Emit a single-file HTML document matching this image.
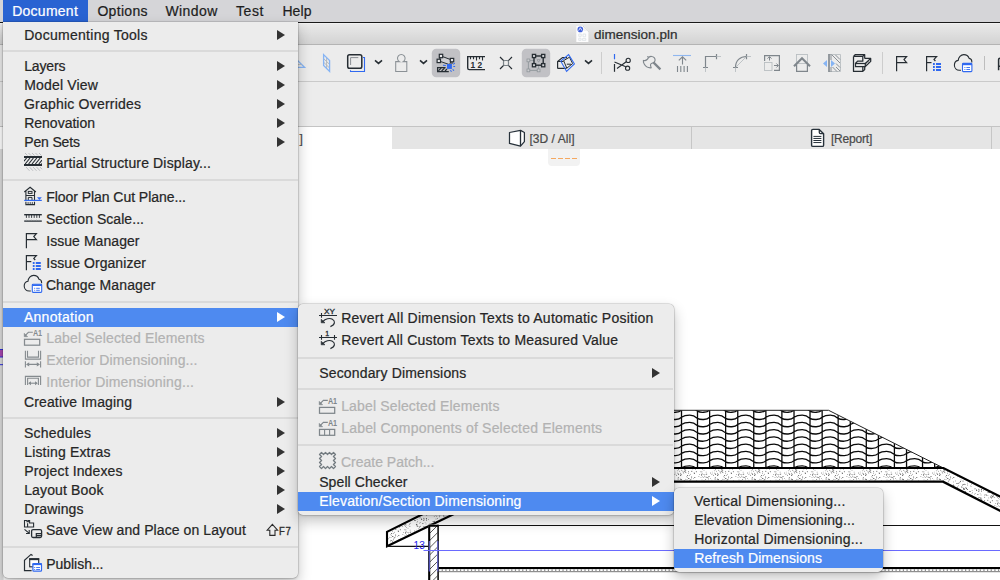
<!DOCTYPE html>
<html><head><meta charset="utf-8"><title>dimension.pln</title>
<style>
html,body{margin:0;padding:0;}
body{width:1000px;height:580px;overflow:hidden;position:relative;background:#fff;font-family:"Liberation Sans",sans-serif;}
.a{position:absolute;}
.t{position:absolute;white-space:pre;display:block;-webkit-text-stroke:0.22px;}
svg{position:absolute;overflow:visible;}
.menu{position:absolute;background:#ececec;box-shadow:0 0 0 0.5px rgba(0,0,0,.2),0 6px 14px rgba(0,0,0,.24),0 1px 3px rgba(0,0,0,.12);}
.sep{position:absolute;left:0;right:0;height:2px;background:#dbdbdb;}
.hl{position:absolute;left:0;right:0;height:19px;background:#4e8af0;}
.arr{position:absolute;width:0;height:0;border-left:8.5px solid #333;border-top:5px solid transparent;border-bottom:5px solid transparent;}
.arr.w{border-left-color:#fff;}
</style></head>
<body>
<div class="a" style="left:0;top:0;width:1000px;height:22px;background:#d5d5d8;"></div>
<div class="a" style="left:0;top:22px;width:1000px;height:1px;background:#1a1a1a;"></div>
<div class="a" style="left:0;top:23px;width:1000px;height:21px;background:linear-gradient(#eaeaea,#d3d3d3);"></div>
<div class="a" style="left:0;top:23px;width:1000px;height:1px;background:#f1f1f1;"></div>
<div class="a" style="left:0;top:44px;width:1000px;height:1px;background:#b4b4b4;"></div>
<div class="a" style="left:0;top:45px;width:1000px;height:81px;background:#ececec;"></div>
<div class="a" style="left:0;top:81px;width:1000px;height:1px;background:#cacaca;"></div>
<div class="a" style="left:0;top:126px;width:1000px;height:1px;background:#c4c4c4;"></div>
<div class="a" style="left:0;top:127px;width:1000px;height:22px;background:#e5e5e5;"></div>
<div class="a" style="left:0;top:127px;width:392px;height:22px;background:#fff;"></div>
<div class="a" style="left:691px;top:127px;width:1px;height:22px;background:#c6c6c6;"></div>
<div class="a" style="left:991px;top:127px;width:1px;height:22px;background:#c6c6c6;"></div>
<div class="a" style="left:3px;top:0;width:85px;height:22px;background:#2963d2;"></div>
<span class="t" style="left:12.20px;top:3.00px;font-size:14px;line-height:16px;letter-spacing:0.256px;color:#fff;">Document</span>
<span class="t" style="left:97.40px;top:3.00px;font-size:14px;line-height:16px;letter-spacing:0.309px;color:#1e1e1e;">Options</span>
<span class="t" style="left:165.40px;top:3.00px;font-size:14px;line-height:16px;letter-spacing:0.452px;color:#1e1e1e;">Window</span>
<span class="t" style="left:235.90px;top:3.00px;font-size:14px;line-height:16px;letter-spacing:0.641px;color:#1e1e1e;">Test</span>
<span class="t" style="left:282.40px;top:3.00px;font-size:14px;line-height:16px;letter-spacing:0.104px;color:#1e1e1e;">Help</span>
<span class="t" style="left:593.90px;top:27.00px;font-size:13.5px;line-height:15px;letter-spacing:0.024px;color:#2e2e2e;">dimension.pln</span>
<svg width="20" height="20" viewBox="574 24 20 20" style="left:574px;top:24px;" fill="none">
<path d="M576.3 26.1H583.6L588.4 31V41.9H576.3Z" fill="#fdfdfd"/>
<path d="M583.4 26.4L588.2 31.3" stroke="#9a9a9a" stroke-width="0.9"/>
<path d="M583.6 26.3V31H588.3" fill="#f0f0f0"/>
<circle cx="580.3" cy="29.4" r="2.8" fill="#3f5fdc"/>
<path d="M578.6 30.6L580.3 27.8L582 30.6" stroke="#e8ecff" stroke-width="0.9"/>
<path d="M578.8 34H581.2V36.4H578.8ZM583 34H585.6V36.8H583ZM578.8 38.2H581V40.4H578.8ZM582.4 38.6H585.8V40.4H582.4Z" stroke="#dfe3e7" stroke-width="0.9"/>
</svg>
<svg width="1000" height="130" viewBox="0 0 1000 130" style="left:0;top:0;" fill="none" stroke-linecap="butt">
<rect x="431.8" y="48.7" width="28.4" height="28.6" rx="4.5" fill="#c1c1c5"/>
<rect x="521.8" y="48.7" width="28.4" height="28.6" rx="4.5" fill="#c1c1c5"/>
<path d="M297 60L304.6 67.4H297" stroke="#86b4f4" stroke-width="1.3"/>
<path d="M298 64.6H301.4" stroke="#b4b9bd" stroke-width="1"/>
<path d="M326.6 57.8V68.6M323.6 58.6L329.6 64.4M323.6 62.2L329.6 68" stroke="#b4b9bd" stroke-width="1"/>
<path d="M323.6 54.6L329.6 60.6V71.4L323.6 65.4Z" stroke="#86b4f4" stroke-width="1.3"/>
<path d="M350.5 70.2V71.5H364.5V57.5H363" stroke="#3069f0" stroke-width="1.1"/>
<rect x="347.7" y="54.7" width="14.1" height="13.6" rx="1.8" stroke="#262d33" stroke-width="1.5"/>
<path d="M350.6 65V57.6H358.3" stroke="#8a8f94" stroke-width="1"/>
<path d="M375 60.3L378.5 63.4L382 60.3" stroke="#262d33" stroke-width="1.6" stroke-linejoin="miter"/>
<path d="M420 60.3L423.5 63.4L427 60.3" stroke="#262d33" stroke-width="1.6" stroke-linejoin="miter"/>
<path d="M585 60.3L588.5 63.4L592 60.3" stroke="#262d33" stroke-width="1.6" stroke-linejoin="miter"/>
<path d="M399.4 61.6A3.8 3.8 0 1 1 403.2 61.6H406.8V71.5H395.7V61.6Z" stroke="#8b9196" stroke-width="1.05"/>
<path d="M441 56L452 60.1L449.4 64.6L438.8 60.9Z" fill="#cfcfd3" stroke="#262d33" stroke-width="1"/>
<path d="M452 60.1V64" stroke="#262d33" stroke-width="1"/>
<rect x="439.3" y="54.3" width="3.4" height="3.4" fill="#e9e9eb" stroke="#262d33" stroke-width="1.2"/>
<rect x="437.1" y="59.199999999999996" width="3.4" height="3.4" fill="#e9e9eb" stroke="#262d33" stroke-width="1.2"/>
<rect x="450.3" y="58.4" width="3.4" height="3.4" fill="#e9e9eb" stroke="#262d33" stroke-width="1.2"/>
<path d="M437.6 71.6V67.7H445.6M437 71.5H448.8" stroke="#262d33" stroke-width="1.25"/>
<path d="M438.4 70.8L441.2 68M441.6 71L444.6 68M445 71L447 69" stroke="#262d33" stroke-width="1.1"/>
<rect x="447" y="64" width="4.9" height="4.9" fill="#3069f0"/>
<path d="M443 65.3L445.8 65.5M453.2 64.4L454.8 63.1M453.3 66.5H455.1M452.6 69.3L454 70.6M450.3 70.3L451.6 71.7" stroke="#3069f0" stroke-width="1.05"/>
<path d="M485 56.6H467.7V68Q467.7 69.6 469.3 69.6H485" stroke="#262d33" stroke-width="1.4"/>
<path d="M470.5 57V59.3M473.5 57V59.3M476.5 57V60.5M479.5 57V59.3M482.5 57V60.5" stroke="#262d33" stroke-width="1.1"/>
<text x="470.6" y="67.8" font-family="Liberation Sans, sans-serif" font-weight="bold" font-size="8.4" fill="#262d33" stroke="none">1</text>
<text x="477.6" y="67.8" font-family="Liberation Sans, sans-serif" font-weight="bold" font-size="8.4" fill="#262d33" stroke="none">2</text>
<path d="M500 57L512 69M512 57L500 69" stroke="#262d33" stroke-width="1.2"/>
<rect x="503.5" y="60.5" width="5" height="5" rx="1.3" fill="#ececec" stroke="#7b8388" stroke-width="1.2"/>
<path d="M528.4 60.4H538.6V70.4H528.4Z" stroke="#8f969a" stroke-width="0.9"/>
<rect x="527.0" y="59.0" width="2.8" height="2.8" fill="#cdcdd1" stroke="#8f969a" stroke-width="0.8"/>
<rect x="527.0" y="69.0" width="2.8" height="2.8" fill="#cdcdd1" stroke="#8f969a" stroke-width="0.8"/>
<rect x="537.2" y="69.0" width="2.8" height="2.8" fill="#cdcdd1" stroke="#8f969a" stroke-width="0.8"/>
<rect x="534" y="56" width="9.2" height="9.2" fill="#c1c1c5" stroke="#262d33" stroke-width="1.4"/>
<path d="M537 59.6H540.2L538.6 62.2Z" stroke="#8f969a" stroke-width="0.8"/>
<rect x="532.4" y="54.4" width="3.2" height="3.2" fill="#d4d4d8" stroke="#262d33" stroke-width="1.3"/>
<rect x="541.6" y="54.4" width="3.2" height="3.2" fill="#d4d4d8" stroke="#262d33" stroke-width="1.3"/>
<rect x="532.4" y="63.6" width="3.2" height="3.2" fill="#d4d4d8" stroke="#262d33" stroke-width="1.3"/>
<rect x="541.6" y="63.6" width="3.2" height="3.2" fill="#d4d4d8" stroke="#262d33" stroke-width="1.3"/>
<path d="M557.6 68.4V61.5L562.5 57.6H567M557.6 68.4H566.5M557.6 61.5H563.5" stroke="#262d33" stroke-width="1.2"/>
<path d="M563.6 60.6L569.5 57.2L572.6 63.6L566.8 68.2ZM566.8 64.2H571" stroke="#262d33" stroke-width="1"/>
<path d="M568.6 54.6L574.4 63.8L566.6 71.4L560.8 61.2Z" stroke="#3069f0" stroke-width="1.1"/>
<path d="M601.5 52V74M882.5 52V74" stroke="#cdcdcd" stroke-width="1"/>
<path d="M984.5 56V70" stroke="#bdbdbd" stroke-width="1"/>
<path d="M614.5 54V59.3" stroke="#3069f0" stroke-width="1.2"/>
<path d="M614.5 64V71.8" stroke="#262d33" stroke-width="1.2"/>
<path d="M614.5 62L625.8 66.8M617 68.5L626.2 61.8" stroke="#262d33" stroke-width="1.1"/>
<circle cx="628.2" cy="60.4" r="2.1" stroke="#262d33" stroke-width="1.1"/><circle cx="627.6" cy="68.2" r="2.1" stroke="#262d33" stroke-width="1.1"/>
<path d="M648.6 57.6C650 56 653 56 654.4 57.8C655.6 59.4 655.2 61.6 653.6 62.6C652.4 63.2 651 63.2 650.6 64.4C650.2 65.6 651 66.6 651.2 67.8C648.5 68 645.5 66.5 644.2 64C643.4 62.6 643.2 61.4 643.4 60.4C645 61 647.2 60.4 648.6 57.6Z" stroke="#7f868c" stroke-width="1.1"/>
<circle cx="647.9" cy="56.7" r="0.8" fill="#7f868c" stroke="none"/>
<path d="M653.4 62.4L660.4 69.4" stroke="#7f868c" stroke-width="2.2"/>
<path d="M673 55.5H691" stroke="#8fb7f0" stroke-width="1.1"/>
<path d="M682.5 57V64.5M678.8 60.4L682.5 56.8L686.2 60.4" stroke="#7f868c" stroke-width="1.1"/>
<path d="M677.5 66V72M680.8 66V72M684.1 66V72M687.4 66V72" stroke="#7f868c" stroke-width="1.1"/>
<path d="M705.5 67.5V56.5H716.5" stroke="#7f868c" stroke-width="1.2"/>
<path d="M716.5 54V59.2M703 67.5H708" stroke="#7f868c" stroke-width="1.2"/>
<path d="M716.5 56.5H721M705.5 67.5V72" stroke="#b9bec2" stroke-width="0.9"/>
<path d="M735.5 67.5C735.5 60.5 740 56.5 746.5 56.5" stroke="#7f868c" stroke-width="1.2"/>
<path d="M746.5 54V59.2M733 67.5H738" stroke="#7f868c" stroke-width="1.2"/>
<path d="M746.5 56.5H751M735.5 67.5V72M736 67L746 57" stroke="#b9bec2" stroke-width="0.9"/>
<rect x="764.5" y="62.5" width="7.5" height="8" stroke="#b9bec2" stroke-width="0.9"/>
<path d="M764.6 61V55.6H779.4V70.4H774" stroke="#7f868c" stroke-width="1.2"/>
<path d="M769.5 56.8V60.5M767.5 58.6L769.5 56.6L771.5 58.6M774 65.5H778.2M776.4 63.5L778.4 65.5L776.4 67.5" stroke="#7f868c" stroke-width="1"/>
<rect x="796.5" y="54.5" width="11" height="9" stroke="#b9bec2" stroke-width="0.9"/>
<path d="M796.6 64.5V71.4H807.4V64.5" stroke="#7f868c" stroke-width="1.2"/>
<path d="M794 66.2L802 58.2L810 66.2" stroke="#7f868c" stroke-width="2.1" fill="none"/>
<path d="M823 63.5L827 60V67ZM835 63.5L831 60V67Z" fill="#86b4f4" stroke="none"/>
<path d="M828.8 54.5H840.5V71.5H828.8" stroke="#b9bec2" stroke-width="0.9"/>
<path d="M829 54V72" stroke="#7f868c" stroke-width="1.6"/>
<path d="M831 54V60M831 67V72" stroke="#7f868c" stroke-width="0.9"/>
<path d="M832 55L840 63M835.5 55L840 59.5M836 63.5L840 67.5M832.5 67L837 71.5M836 67L840 71" stroke="#7f868c" stroke-width="0.9"/>
<path d="M853.5 56.4V71.4H862.8L864.7 69.6V66.8M853.5 56.4L855.4 54.5H864.7V58.4M853.5 56.4H862.8L864.7 54.5M862.8 56.4V61.2H857.6L855.5 63.5M862.8 66.8V71.4" stroke="#262d33" stroke-width="1.25" stroke-linejoin="round"/>
<rect x="855.5" y="63.5" width="9.8" height="3.1" stroke="#262d33" stroke-width="1.25"/>
<path d="M865.3 63.5L870.7 58.4H864.7M870.7 58.4V61.4L865.3 66.6" stroke="#262d33" stroke-width="1.25" stroke-linejoin="round"/>
<path d="M866.6 65L870.4 61.2M866 63.6L869.4 60.2" stroke="#262d33" stroke-width="0.8" stroke-dasharray="1 0.8"/>
<path d="M896.6 71.2V56.6H906.6L904 59.6L906.6 62.6H896.6" stroke="#262d33" stroke-width="1.2"/>
<path d="M926.6 71.2V56.6H936.6L934 59.4L935.4 61" stroke="#262d33" stroke-width="1.2"/>
<path d="M926.6 62.6H931.5" stroke="#262d33" stroke-width="1.2"/>
<path d="M933 64H934.8M936 64H941" stroke="#3069f0" stroke-width="1.9"/>
<path d="M933 67H934.8M936 67H941" stroke="#3069f0" stroke-width="1.9"/>
<path d="M933 70H934.8M936 70H941" stroke="#3069f0" stroke-width="1.9"/>
<path d="M961 70.2H959.4C956.6 70.2 954.4 68 954.4 65.2C954.4 62.8 956 60.8 958.2 60.4C958.4 57.2 960.8 54.6 963.8 54.6C966.4 54.6 968.4 56.2 969.2 58.4C970.6 58.6 971.8 60 971.8 61.6V62.4" stroke="#262d33" stroke-width="1.1"/>
<rect x="962.5" y="63.4" width="9.4" height="8.2" rx="0.8" fill="#fff" stroke="#3069f0" stroke-width="1.1"/>
<path d="M962.5 64.4H971.9" stroke="#3069f0" stroke-width="1.6"/>
<path d="M964.4 67.5H965.4M966.4 67.5H970M964.4 69.5H965.4M966.4 69.5H970" stroke="#3069f0" stroke-width="0.9"/>
<path d="M998.6 70.2V59.6Q998.6 58.2 1000.2 58.2M998.6 66.2H1001" stroke="#262d33" stroke-width="1.5"/>
</svg>
<span class="t" style="left:299.60px;top:131.50px;font-size:12px;line-height:14px;letter-spacing:0.000px;color:#4a4a4a;">]</span>
<span class="t" style="left:529.40px;top:131.50px;font-size:12px;line-height:14px;letter-spacing:0.047px;color:#4a4a4a;">[3D / All]</span>
<span class="t" style="left:830.90px;top:131.50px;font-size:12px;line-height:14px;letter-spacing:-0.183px;color:#4a4a4a;">[Report]</span>
<svg width="1000" height="24" viewBox="0 126 1000 24" style="left:0;top:126px;" fill="none">
<path d="M509.5 132.5L520.5 130.4L524.4 132.5V141.7L520.5 146.2L509.5 143.4Z" fill="#fff" stroke="#27313a" stroke-width="1.25" stroke-linejoin="round"/>
<path d="M520.5 130.4V146.2" stroke="#27313a" stroke-width="1.3"/>
<path d="M812.9 129.4H819.2L823.6 133.8V145.2Q823.6 146.4 822.4 146.4H812.9Q811.6 146.4 811.6 145.2V130.6Q811.6 129.4 812.9 129.4Z" fill="#fff" stroke="#27313a" stroke-width="1.4" stroke-linejoin="round"/>
<path d="M819.3 129.6V132.6Q819.3 133.7 820.4 133.7H823.4" stroke="#27313a" stroke-width="1.3"/>
<path d="M813.4 136.4H821.4M813.4 138.45H821.4M813.4 140.5H821.4M813.4 142.55H821.4" stroke="#27313a" stroke-width="1"/>
</svg>
<div class="a" style="left:548px;top:149px;width:32px;height:16.5px;background:#f2f2f2;border-radius:0 0 4px 4px;"></div>
<div class="a" style="left:551.2px;top:157.8px;width:5px;height:1.2px;background:#f5a860;"></div>
<div class="a" style="left:558.2px;top:157.8px;width:5px;height:1.2px;background:#f5a860;"></div>
<div class="a" style="left:565.2px;top:157.8px;width:5px;height:1.2px;background:#f5a860;"></div>
<div class="a" style="left:572.2px;top:157.8px;width:5px;height:1.2px;background:#f5a860;"></div>
<svg width="1000" height="580" viewBox="0 0 1000 580" style="left:0;top:0;">
<defs>
<pattern id="stip" width="37" height="29" patternUnits="userSpaceOnUse"><rect width="37" height="29" fill="#fff"/><g fill="#333"><circle cx="12.0" cy="4.4" r="0.35"/><circle cx="2.7" cy="15.5" r="0.45"/><circle cx="21.6" cy="26.4" r="0.4"/><circle cx="1.4" cy="12.6" r="0.35"/><circle cx="8.9" cy="16.0" r="0.35"/><circle cx="30.6" cy="3.6" r="0.4"/><circle cx="23.3" cy="16.9" r="0.35"/><circle cx="21.4" cy="11.5" r="0.4"/><circle cx="1.7" cy="24.9" r="0.45"/><circle cx="15.5" cy="15.7" r="0.45"/><circle cx="20.7" cy="19.8" r="0.35"/><circle cx="21.5" cy="18.5" r="0.45"/><circle cx="3.6" cy="20.7" r="0.35"/><circle cx="22.9" cy="14.4" r="0.5"/><circle cx="28.8" cy="13.5" r="0.5"/><circle cx="13.4" cy="7.2" r="0.4"/><circle cx="25.9" cy="7.1" r="0.45"/><circle cx="19.4" cy="25.4" r="0.5"/><circle cx="10.7" cy="28.4" r="0.35"/><circle cx="18.9" cy="4.8" r="0.45"/><circle cx="5.6" cy="14.2" r="0.35"/><circle cx="35.6" cy="2.3" r="0.45"/><circle cx="12.6" cy="10.2" r="0.5"/><circle cx="21.5" cy="13.2" r="0.35"/><circle cx="35.0" cy="13.7" r="0.35"/><circle cx="2.2" cy="20.3" r="0.5"/><circle cx="10.5" cy="11.2" r="0.45"/><circle cx="0.8" cy="13.4" r="0.4"/><circle cx="22.6" cy="14.3" r="0.4"/><circle cx="28.4" cy="3.8" r="0.4"/><circle cx="14.7" cy="26.6" r="0.5"/><circle cx="3.0" cy="13.0" r="0.45"/><circle cx="32.7" cy="23.8" r="0.45"/><circle cx="26.1" cy="28.6" r="0.5"/><circle cx="35.4" cy="4.4" r="0.4"/><circle cx="5.6" cy="19.1" r="0.35"/><circle cx="17.9" cy="17.1" r="0.45"/><circle cx="10.4" cy="4.2" r="0.45"/><circle cx="22.6" cy="9.2" r="0.4"/><circle cx="25.5" cy="14.9" r="0.35"/><circle cx="16.9" cy="25.3" r="0.5"/><circle cx="14.7" cy="11.4" r="0.5"/><circle cx="23.5" cy="1.8" r="0.35"/><circle cx="36.4" cy="12.8" r="0.35"/><circle cx="12.6" cy="1.5" r="0.35"/><circle cx="21.0" cy="15.6" r="0.45"/><circle cx="22.7" cy="2.0" r="0.4"/><circle cx="22.7" cy="4.3" r="0.45"/><circle cx="35.4" cy="17.5" r="0.5"/><circle cx="4.5" cy="24.6" r="0.5"/><circle cx="17.8" cy="9.0" r="0.4"/><circle cx="3.8" cy="9.9" r="0.45"/><circle cx="17.7" cy="20.1" r="0.35"/><circle cx="7.6" cy="27.6" r="0.45"/><circle cx="5.4" cy="15.8" r="0.35"/><circle cx="28.1" cy="8.6" r="0.35"/><circle cx="25.8" cy="7.6" r="0.45"/><circle cx="33.6" cy="10.3" r="0.4"/><circle cx="19.7" cy="22.6" r="0.45"/><circle cx="23.5" cy="17.8" r="0.4"/><circle cx="29.8" cy="23.7" r="0.4"/><circle cx="7.4" cy="14.3" r="0.35"/><circle cx="36.6" cy="22.9" r="0.5"/><circle cx="9.6" cy="20.1" r="0.45"/><circle cx="16.5" cy="27.2" r="0.45"/><circle cx="35.3" cy="10.6" r="0.4"/><circle cx="3.8" cy="13.6" r="0.45"/><circle cx="7.6" cy="18.1" r="0.35"/><circle cx="17.7" cy="18.9" r="0.35"/><circle cx="30.9" cy="3.5" r="0.5"/><circle cx="28.9" cy="21.8" r="0.5"/><circle cx="32.9" cy="12.6" r="0.45"/><circle cx="3.2" cy="27.4" r="0.5"/><circle cx="17.1" cy="21.6" r="0.35"/><circle cx="26.8" cy="4.9" r="0.4"/><circle cx="1.0" cy="17.1" r="0.5"/><circle cx="29.8" cy="4.2" r="0.5"/><circle cx="24.3" cy="10.2" r="0.4"/><circle cx="0.8" cy="23.2" r="0.35"/><circle cx="19.5" cy="27.1" r="0.5"/><circle cx="36.5" cy="5.6" r="0.4"/><circle cx="1.0" cy="6.2" r="0.4"/><circle cx="28.3" cy="9.5" r="0.5"/><circle cx="30.9" cy="1.8" r="0.45"/><circle cx="33.2" cy="19.2" r="0.5"/><circle cx="30.6" cy="25.5" r="0.4"/><circle cx="19.7" cy="15.2" r="0.35"/><circle cx="32.3" cy="22.5" r="0.35"/><circle cx="28.7" cy="4.3" r="0.4"/><circle cx="17.5" cy="21.0" r="0.35"/><circle cx="12.1" cy="15.0" r="0.5"/><circle cx="29.0" cy="3.1" r="0.35"/><circle cx="9.2" cy="8.0" r="0.35"/><circle cx="18.8" cy="16.3" r="0.35"/><circle cx="16.4" cy="17.8" r="0.4"/><circle cx="25.6" cy="13.1" r="0.5"/><circle cx="18.8" cy="7.2" r="0.45"/><circle cx="34.1" cy="25.9" r="0.4"/><circle cx="31.1" cy="4.0" r="0.35"/><circle cx="14.5" cy="9.2" r="0.4"/><circle cx="15.8" cy="6.2" r="0.45"/><circle cx="29.0" cy="26.0" r="0.4"/><circle cx="34.8" cy="18.7" r="0.45"/><circle cx="5.3" cy="25.6" r="0.5"/><circle cx="8.1" cy="27.6" r="0.5"/><circle cx="32.7" cy="4.7" r="0.4"/><circle cx="6.0" cy="12.5" r="0.5"/><circle cx="12.5" cy="5.7" r="0.45"/><circle cx="3.4" cy="10.6" r="0.45"/><circle cx="20.5" cy="12.8" r="0.35"/><circle cx="14.2" cy="15.0" r="0.45"/><circle cx="19.0" cy="1.9" r="0.4"/><circle cx="36.0" cy="3.0" r="0.45"/><circle cx="10.1" cy="26.3" r="0.4"/><circle cx="10.0" cy="3.8" r="0.5"/><circle cx="31.4" cy="19.6" r="0.45"/><circle cx="15.0" cy="15.6" r="0.5"/><circle cx="25.9" cy="2.6" r="0.35"/><circle cx="29.6" cy="5.3" r="0.35"/><circle cx="10.0" cy="0.5" r="0.35"/><circle cx="29.7" cy="2.4" r="0.4"/><circle cx="2.5" cy="25.0" r="0.5"/><circle cx="0.4" cy="28.8" r="0.5"/><circle cx="34.3" cy="7.8" r="0.4"/><circle cx="1.6" cy="20.6" r="0.35"/><circle cx="35.9" cy="7.6" r="0.4"/><circle cx="7.5" cy="9.0" r="0.45"/><circle cx="19.7" cy="6.0" r="0.5"/><circle cx="18.5" cy="5.2" r="0.45"/><circle cx="29.7" cy="28.8" r="0.35"/><circle cx="0.6" cy="21.3" r="0.4"/><circle cx="19.0" cy="7.1" r="0.5"/><circle cx="3.9" cy="23.7" r="0.5"/><circle cx="24.3" cy="15.8" r="0.5"/><circle cx="35.9" cy="8.9" r="0.4"/><circle cx="36.4" cy="9.9" r="0.4"/><circle cx="15.0" cy="10.1" r="0.35"/><circle cx="31.0" cy="0.4" r="0.45"/><circle cx="15.9" cy="1.6" r="0.5"/><circle cx="32.2" cy="19.4" r="0.45"/><circle cx="22.2" cy="20.1" r="0.35"/><circle cx="17.0" cy="4.6" r="0.5"/><circle cx="0.1" cy="10.6" r="0.45"/><circle cx="36.0" cy="15.9" r="0.4"/><circle cx="1.3" cy="25.6" r="0.4"/><circle cx="13.2" cy="0.0" r="0.5"/><circle cx="3.1" cy="8.1" r="0.4"/><circle cx="9.2" cy="22.5" r="0.35"/><circle cx="9.8" cy="2.6" r="0.5"/><circle cx="21.7" cy="11.4" r="0.45"/><circle cx="11.3" cy="6.8" r="0.4"/><circle cx="24.3" cy="20.8" r="0.5"/><circle cx="28.3" cy="20.9" r="0.5"/><circle cx="5.5" cy="21.0" r="0.4"/><circle cx="1.6" cy="24.2" r="0.5"/><circle cx="27.2" cy="23.6" r="0.4"/><circle cx="33.7" cy="21.8" r="0.35"/><circle cx="30.6" cy="16.9" r="0.4"/><circle cx="3.1" cy="1.2" r="0.45"/><circle cx="35.5" cy="10.9" r="0.5"/><circle cx="20.7" cy="18.2" r="0.4"/><circle cx="18.1" cy="0.1" r="0.35"/><circle cx="27.7" cy="14.6" r="0.35"/><circle cx="24.4" cy="1.9" r="0.5"/><circle cx="9.3" cy="2.2" r="0.45"/><circle cx="8.7" cy="21.9" r="0.4"/><circle cx="27.4" cy="28.3" r="0.5"/><circle cx="31.3" cy="2.2" r="0.45"/><circle cx="28.4" cy="17.9" r="0.4"/><circle cx="2.9" cy="4.3" r="0.45"/><path d="M22.8 18.7l-0.4 1.0" stroke="#333" stroke-width="0.6"/><path d="M4.7 13.0l0.0 1.1" stroke="#333" stroke-width="0.6"/><path d="M34.0 2.7l0.9 0.7" stroke="#333" stroke-width="0.6"/><path d="M17.1 19.1l0.7 0.9" stroke="#333" stroke-width="0.6"/><path d="M16.3 20.7l-1.1 0.0" stroke="#333" stroke-width="0.6"/><path d="M19.2 8.4l1.1 0.3" stroke="#333" stroke-width="0.6"/><path d="M16.6 7.8l1.1 0.3" stroke="#333" stroke-width="0.6"/><path d="M17.7 26.9l-1.1 0.0" stroke="#333" stroke-width="0.6"/><path d="M13.5 24.7l-1.1 0.2" stroke="#333" stroke-width="0.6"/><path d="M2.6 2.4l-0.8 0.8" stroke="#333" stroke-width="0.6"/><path d="M9.2 9.7l-0.4 1.0" stroke="#333" stroke-width="0.6"/><path d="M22.1 7.5l1.0 0.4" stroke="#333" stroke-width="0.6"/><path d="M12.8 13.4l-1.0 0.4" stroke="#333" stroke-width="0.6"/><path d="M13.8 4.3l-1.1 0.2" stroke="#333" stroke-width="0.6"/><path d="M23.9 10.9l-0.7 0.8" stroke="#333" stroke-width="0.6"/><path d="M14.6 10.2l1.0 0.4" stroke="#333" stroke-width="0.6"/><path d="M11.6 8.8l0.5 1.0" stroke="#333" stroke-width="0.6"/><path d="M13.9 25.4l0.9 0.6" stroke="#333" stroke-width="0.6"/><path d="M0.4 20.0l0.8 0.8" stroke="#333" stroke-width="0.6"/><path d="M2.3 10.5l-1.0 0.4" stroke="#333" stroke-width="0.6"/><path d="M2.7 25.0l-0.8 0.8" stroke="#333" stroke-width="0.6"/><path d="M29.9 7.6l1.1 0.2" stroke="#333" stroke-width="0.6"/></g></pattern>
<clipPath id="tileclip"><polygon points="640,410.3 828.6,410.3 943.4,468 640,468"/></clipPath>
<clipPath id="wallclip"><rect x="429.5" y="526" width="8" height="60"/></clipPath>
</defs>
<g clip-path="url(#tileclip)"><path d="M625.24 410V468M641.24 410V468M653.37 410V468M669.37 410V468M681.50 410V468M697.50 410V468M709.63 410V468M725.63 410V468M737.76 410V468M753.76 410V468M765.89 410V468M781.89 410V468M794.02 410V468M810.02 410V468M822.15 410V468M838.15 410V468M850.28 410V468M866.28 410V468M878.41 410V468M894.41 410V468M906.54 410V468M922.54 410V468M934.67 410V468M950.67 410V468M962.80 410V468M978.80 410V468M625.24 409.96C627.74 408.26 630.74 407.96 633.44 407.96S639.04 409.26 641.24 411.16C642.84 412.16 645.24 412.36 647.44 412.26S652.04 411.36 653.37 409.96C655.87 408.26 658.87 407.96 661.57 407.96S667.17 409.26 669.37 411.16C670.97 412.16 673.37 412.36 675.57 412.26S680.17 411.36 681.50 409.96C684.00 408.26 687.00 407.96 689.70 407.96S695.30 409.26 697.50 411.16C699.10 412.16 701.50 412.36 703.70 412.26S708.30 411.36 709.63 409.96C712.13 408.26 715.13 407.96 717.83 407.96S723.43 409.26 725.63 411.16C727.23 412.16 729.63 412.36 731.83 412.26S736.43 411.36 737.76 409.96C740.26 408.26 743.26 407.96 745.96 407.96S751.56 409.26 753.76 411.16C755.36 412.16 757.76 412.36 759.96 412.26S764.56 411.36 765.89 409.96C768.39 408.26 771.39 407.96 774.09 407.96S779.69 409.26 781.89 411.16C783.49 412.16 785.89 412.36 788.09 412.26S792.69 411.36 794.02 409.96C796.52 408.26 799.52 407.96 802.22 407.96S807.82 409.26 810.02 411.16C811.62 412.16 814.02 412.36 816.22 412.26S820.82 411.36 822.15 409.96C824.65 408.26 827.65 407.96 830.35 407.96S835.95 409.26 838.15 411.16C839.75 412.16 842.15 412.36 844.35 412.26S848.95 411.36 850.28 409.96C852.78 408.26 855.78 407.96 858.48 407.96S864.08 409.26 866.28 411.16C867.88 412.16 870.28 412.36 872.48 412.26S877.08 411.36 878.41 409.96C880.91 408.26 883.91 407.96 886.61 407.96S892.21 409.26 894.41 411.16C896.01 412.16 898.41 412.36 900.61 412.26S905.21 411.36 906.54 409.96C909.04 408.26 912.04 407.96 914.74 407.96S920.34 409.26 922.54 411.16C924.14 412.16 926.54 412.36 928.74 412.26S933.34 411.36 934.67 409.96C937.17 408.26 940.17 407.96 942.87 407.96S948.47 409.26 950.67 411.16C952.27 412.16 954.67 412.36 956.87 412.26S961.47 411.36 962.80 409.96C965.30 408.26 968.30 407.96 971.00 407.96S976.60 409.26 978.80 411.16C980.40 412.16 982.80 412.36 985.00 412.26S989.60 411.36 990.93 409.96M625.24 417.20C627.74 415.50 630.74 415.20 633.44 415.20S639.04 416.50 641.24 418.40C642.84 419.40 645.24 419.60 647.44 419.50S652.04 418.60 653.37 417.20C655.87 415.50 658.87 415.20 661.57 415.20S667.17 416.50 669.37 418.40C670.97 419.40 673.37 419.60 675.57 419.50S680.17 418.60 681.50 417.20C684.00 415.50 687.00 415.20 689.70 415.20S695.30 416.50 697.50 418.40C699.10 419.40 701.50 419.60 703.70 419.50S708.30 418.60 709.63 417.20C712.13 415.50 715.13 415.20 717.83 415.20S723.43 416.50 725.63 418.40C727.23 419.40 729.63 419.60 731.83 419.50S736.43 418.60 737.76 417.20C740.26 415.50 743.26 415.20 745.96 415.20S751.56 416.50 753.76 418.40C755.36 419.40 757.76 419.60 759.96 419.50S764.56 418.60 765.89 417.20C768.39 415.50 771.39 415.20 774.09 415.20S779.69 416.50 781.89 418.40C783.49 419.40 785.89 419.60 788.09 419.50S792.69 418.60 794.02 417.20C796.52 415.50 799.52 415.20 802.22 415.20S807.82 416.50 810.02 418.40C811.62 419.40 814.02 419.60 816.22 419.50S820.82 418.60 822.15 417.20C824.65 415.50 827.65 415.20 830.35 415.20S835.95 416.50 838.15 418.40C839.75 419.40 842.15 419.60 844.35 419.50S848.95 418.60 850.28 417.20C852.78 415.50 855.78 415.20 858.48 415.20S864.08 416.50 866.28 418.40C867.88 419.40 870.28 419.60 872.48 419.50S877.08 418.60 878.41 417.20C880.91 415.50 883.91 415.20 886.61 415.20S892.21 416.50 894.41 418.40C896.01 419.40 898.41 419.60 900.61 419.50S905.21 418.60 906.54 417.20C909.04 415.50 912.04 415.20 914.74 415.20S920.34 416.50 922.54 418.40C924.14 419.40 926.54 419.60 928.74 419.50S933.34 418.60 934.67 417.20C937.17 415.50 940.17 415.20 942.87 415.20S948.47 416.50 950.67 418.40C952.27 419.40 954.67 419.60 956.87 419.50S961.47 418.60 962.80 417.20C965.30 415.50 968.30 415.20 971.00 415.20S976.60 416.50 978.80 418.40C980.40 419.40 982.80 419.60 985.00 419.50S989.60 418.60 990.93 417.20M625.24 424.44C627.74 422.74 630.74 422.44 633.44 422.44S639.04 423.74 641.24 425.64C642.84 426.64 645.24 426.84 647.44 426.74S652.04 425.84 653.37 424.44C655.87 422.74 658.87 422.44 661.57 422.44S667.17 423.74 669.37 425.64C670.97 426.64 673.37 426.84 675.57 426.74S680.17 425.84 681.50 424.44C684.00 422.74 687.00 422.44 689.70 422.44S695.30 423.74 697.50 425.64C699.10 426.64 701.50 426.84 703.70 426.74S708.30 425.84 709.63 424.44C712.13 422.74 715.13 422.44 717.83 422.44S723.43 423.74 725.63 425.64C727.23 426.64 729.63 426.84 731.83 426.74S736.43 425.84 737.76 424.44C740.26 422.74 743.26 422.44 745.96 422.44S751.56 423.74 753.76 425.64C755.36 426.64 757.76 426.84 759.96 426.74S764.56 425.84 765.89 424.44C768.39 422.74 771.39 422.44 774.09 422.44S779.69 423.74 781.89 425.64C783.49 426.64 785.89 426.84 788.09 426.74S792.69 425.84 794.02 424.44C796.52 422.74 799.52 422.44 802.22 422.44S807.82 423.74 810.02 425.64C811.62 426.64 814.02 426.84 816.22 426.74S820.82 425.84 822.15 424.44C824.65 422.74 827.65 422.44 830.35 422.44S835.95 423.74 838.15 425.64C839.75 426.64 842.15 426.84 844.35 426.74S848.95 425.84 850.28 424.44C852.78 422.74 855.78 422.44 858.48 422.44S864.08 423.74 866.28 425.64C867.88 426.64 870.28 426.84 872.48 426.74S877.08 425.84 878.41 424.44C880.91 422.74 883.91 422.44 886.61 422.44S892.21 423.74 894.41 425.64C896.01 426.64 898.41 426.84 900.61 426.74S905.21 425.84 906.54 424.44C909.04 422.74 912.04 422.44 914.74 422.44S920.34 423.74 922.54 425.64C924.14 426.64 926.54 426.84 928.74 426.74S933.34 425.84 934.67 424.44C937.17 422.74 940.17 422.44 942.87 422.44S948.47 423.74 950.67 425.64C952.27 426.64 954.67 426.84 956.87 426.74S961.47 425.84 962.80 424.44C965.30 422.74 968.30 422.44 971.00 422.44S976.60 423.74 978.80 425.64C980.40 426.64 982.80 426.84 985.00 426.74S989.60 425.84 990.93 424.44M625.24 431.68C627.74 429.98 630.74 429.68 633.44 429.68S639.04 430.98 641.24 432.88C642.84 433.88 645.24 434.08 647.44 433.98S652.04 433.08 653.37 431.68C655.87 429.98 658.87 429.68 661.57 429.68S667.17 430.98 669.37 432.88C670.97 433.88 673.37 434.08 675.57 433.98S680.17 433.08 681.50 431.68C684.00 429.98 687.00 429.68 689.70 429.68S695.30 430.98 697.50 432.88C699.10 433.88 701.50 434.08 703.70 433.98S708.30 433.08 709.63 431.68C712.13 429.98 715.13 429.68 717.83 429.68S723.43 430.98 725.63 432.88C727.23 433.88 729.63 434.08 731.83 433.98S736.43 433.08 737.76 431.68C740.26 429.98 743.26 429.68 745.96 429.68S751.56 430.98 753.76 432.88C755.36 433.88 757.76 434.08 759.96 433.98S764.56 433.08 765.89 431.68C768.39 429.98 771.39 429.68 774.09 429.68S779.69 430.98 781.89 432.88C783.49 433.88 785.89 434.08 788.09 433.98S792.69 433.08 794.02 431.68C796.52 429.98 799.52 429.68 802.22 429.68S807.82 430.98 810.02 432.88C811.62 433.88 814.02 434.08 816.22 433.98S820.82 433.08 822.15 431.68C824.65 429.98 827.65 429.68 830.35 429.68S835.95 430.98 838.15 432.88C839.75 433.88 842.15 434.08 844.35 433.98S848.95 433.08 850.28 431.68C852.78 429.98 855.78 429.68 858.48 429.68S864.08 430.98 866.28 432.88C867.88 433.88 870.28 434.08 872.48 433.98S877.08 433.08 878.41 431.68C880.91 429.98 883.91 429.68 886.61 429.68S892.21 430.98 894.41 432.88C896.01 433.88 898.41 434.08 900.61 433.98S905.21 433.08 906.54 431.68C909.04 429.98 912.04 429.68 914.74 429.68S920.34 430.98 922.54 432.88C924.14 433.88 926.54 434.08 928.74 433.98S933.34 433.08 934.67 431.68C937.17 429.98 940.17 429.68 942.87 429.68S948.47 430.98 950.67 432.88C952.27 433.88 954.67 434.08 956.87 433.98S961.47 433.08 962.80 431.68C965.30 429.98 968.30 429.68 971.00 429.68S976.60 430.98 978.80 432.88C980.40 433.88 982.80 434.08 985.00 433.98S989.60 433.08 990.93 431.68M625.24 438.92C627.74 437.22 630.74 436.92 633.44 436.92S639.04 438.22 641.24 440.12C642.84 441.12 645.24 441.32 647.44 441.22S652.04 440.32 653.37 438.92C655.87 437.22 658.87 436.92 661.57 436.92S667.17 438.22 669.37 440.12C670.97 441.12 673.37 441.32 675.57 441.22S680.17 440.32 681.50 438.92C684.00 437.22 687.00 436.92 689.70 436.92S695.30 438.22 697.50 440.12C699.10 441.12 701.50 441.32 703.70 441.22S708.30 440.32 709.63 438.92C712.13 437.22 715.13 436.92 717.83 436.92S723.43 438.22 725.63 440.12C727.23 441.12 729.63 441.32 731.83 441.22S736.43 440.32 737.76 438.92C740.26 437.22 743.26 436.92 745.96 436.92S751.56 438.22 753.76 440.12C755.36 441.12 757.76 441.32 759.96 441.22S764.56 440.32 765.89 438.92C768.39 437.22 771.39 436.92 774.09 436.92S779.69 438.22 781.89 440.12C783.49 441.12 785.89 441.32 788.09 441.22S792.69 440.32 794.02 438.92C796.52 437.22 799.52 436.92 802.22 436.92S807.82 438.22 810.02 440.12C811.62 441.12 814.02 441.32 816.22 441.22S820.82 440.32 822.15 438.92C824.65 437.22 827.65 436.92 830.35 436.92S835.95 438.22 838.15 440.12C839.75 441.12 842.15 441.32 844.35 441.22S848.95 440.32 850.28 438.92C852.78 437.22 855.78 436.92 858.48 436.92S864.08 438.22 866.28 440.12C867.88 441.12 870.28 441.32 872.48 441.22S877.08 440.32 878.41 438.92C880.91 437.22 883.91 436.92 886.61 436.92S892.21 438.22 894.41 440.12C896.01 441.12 898.41 441.32 900.61 441.22S905.21 440.32 906.54 438.92C909.04 437.22 912.04 436.92 914.74 436.92S920.34 438.22 922.54 440.12C924.14 441.12 926.54 441.32 928.74 441.22S933.34 440.32 934.67 438.92C937.17 437.22 940.17 436.92 942.87 436.92S948.47 438.22 950.67 440.12C952.27 441.12 954.67 441.32 956.87 441.22S961.47 440.32 962.80 438.92C965.30 437.22 968.30 436.92 971.00 436.92S976.60 438.22 978.80 440.12C980.40 441.12 982.80 441.32 985.00 441.22S989.60 440.32 990.93 438.92M625.24 446.16C627.74 444.46 630.74 444.16 633.44 444.16S639.04 445.46 641.24 447.36C642.84 448.36 645.24 448.56 647.44 448.46S652.04 447.56 653.37 446.16C655.87 444.46 658.87 444.16 661.57 444.16S667.17 445.46 669.37 447.36C670.97 448.36 673.37 448.56 675.57 448.46S680.17 447.56 681.50 446.16C684.00 444.46 687.00 444.16 689.70 444.16S695.30 445.46 697.50 447.36C699.10 448.36 701.50 448.56 703.70 448.46S708.30 447.56 709.63 446.16C712.13 444.46 715.13 444.16 717.83 444.16S723.43 445.46 725.63 447.36C727.23 448.36 729.63 448.56 731.83 448.46S736.43 447.56 737.76 446.16C740.26 444.46 743.26 444.16 745.96 444.16S751.56 445.46 753.76 447.36C755.36 448.36 757.76 448.56 759.96 448.46S764.56 447.56 765.89 446.16C768.39 444.46 771.39 444.16 774.09 444.16S779.69 445.46 781.89 447.36C783.49 448.36 785.89 448.56 788.09 448.46S792.69 447.56 794.02 446.16C796.52 444.46 799.52 444.16 802.22 444.16S807.82 445.46 810.02 447.36C811.62 448.36 814.02 448.56 816.22 448.46S820.82 447.56 822.15 446.16C824.65 444.46 827.65 444.16 830.35 444.16S835.95 445.46 838.15 447.36C839.75 448.36 842.15 448.56 844.35 448.46S848.95 447.56 850.28 446.16C852.78 444.46 855.78 444.16 858.48 444.16S864.08 445.46 866.28 447.36C867.88 448.36 870.28 448.56 872.48 448.46S877.08 447.56 878.41 446.16C880.91 444.46 883.91 444.16 886.61 444.16S892.21 445.46 894.41 447.36C896.01 448.36 898.41 448.56 900.61 448.46S905.21 447.56 906.54 446.16C909.04 444.46 912.04 444.16 914.74 444.16S920.34 445.46 922.54 447.36C924.14 448.36 926.54 448.56 928.74 448.46S933.34 447.56 934.67 446.16C937.17 444.46 940.17 444.16 942.87 444.16S948.47 445.46 950.67 447.36C952.27 448.36 954.67 448.56 956.87 448.46S961.47 447.56 962.80 446.16C965.30 444.46 968.30 444.16 971.00 444.16S976.60 445.46 978.80 447.36C980.40 448.36 982.80 448.56 985.00 448.46S989.60 447.56 990.93 446.16M625.24 453.40C627.74 451.70 630.74 451.40 633.44 451.40S639.04 452.70 641.24 454.60C642.84 455.60 645.24 455.80 647.44 455.70S652.04 454.80 653.37 453.40C655.87 451.70 658.87 451.40 661.57 451.40S667.17 452.70 669.37 454.60C670.97 455.60 673.37 455.80 675.57 455.70S680.17 454.80 681.50 453.40C684.00 451.70 687.00 451.40 689.70 451.40S695.30 452.70 697.50 454.60C699.10 455.60 701.50 455.80 703.70 455.70S708.30 454.80 709.63 453.40C712.13 451.70 715.13 451.40 717.83 451.40S723.43 452.70 725.63 454.60C727.23 455.60 729.63 455.80 731.83 455.70S736.43 454.80 737.76 453.40C740.26 451.70 743.26 451.40 745.96 451.40S751.56 452.70 753.76 454.60C755.36 455.60 757.76 455.80 759.96 455.70S764.56 454.80 765.89 453.40C768.39 451.70 771.39 451.40 774.09 451.40S779.69 452.70 781.89 454.60C783.49 455.60 785.89 455.80 788.09 455.70S792.69 454.80 794.02 453.40C796.52 451.70 799.52 451.40 802.22 451.40S807.82 452.70 810.02 454.60C811.62 455.60 814.02 455.80 816.22 455.70S820.82 454.80 822.15 453.40C824.65 451.70 827.65 451.40 830.35 451.40S835.95 452.70 838.15 454.60C839.75 455.60 842.15 455.80 844.35 455.70S848.95 454.80 850.28 453.40C852.78 451.70 855.78 451.40 858.48 451.40S864.08 452.70 866.28 454.60C867.88 455.60 870.28 455.80 872.48 455.70S877.08 454.80 878.41 453.40C880.91 451.70 883.91 451.40 886.61 451.40S892.21 452.70 894.41 454.60C896.01 455.60 898.41 455.80 900.61 455.70S905.21 454.80 906.54 453.40C909.04 451.70 912.04 451.40 914.74 451.40S920.34 452.70 922.54 454.60C924.14 455.60 926.54 455.80 928.74 455.70S933.34 454.80 934.67 453.40C937.17 451.70 940.17 451.40 942.87 451.40S948.47 452.70 950.67 454.60C952.27 455.60 954.67 455.80 956.87 455.70S961.47 454.80 962.80 453.40C965.30 451.70 968.30 451.40 971.00 451.40S976.60 452.70 978.80 454.60C980.40 455.60 982.80 455.80 985.00 455.70S989.60 454.80 990.93 453.40M625.24 460.64C627.74 458.94 630.74 458.64 633.44 458.64S639.04 459.94 641.24 461.84C642.84 462.84 645.24 463.04 647.44 462.94S652.04 462.04 653.37 460.64C655.87 458.94 658.87 458.64 661.57 458.64S667.17 459.94 669.37 461.84C670.97 462.84 673.37 463.04 675.57 462.94S680.17 462.04 681.50 460.64C684.00 458.94 687.00 458.64 689.70 458.64S695.30 459.94 697.50 461.84C699.10 462.84 701.50 463.04 703.70 462.94S708.30 462.04 709.63 460.64C712.13 458.94 715.13 458.64 717.83 458.64S723.43 459.94 725.63 461.84C727.23 462.84 729.63 463.04 731.83 462.94S736.43 462.04 737.76 460.64C740.26 458.94 743.26 458.64 745.96 458.64S751.56 459.94 753.76 461.84C755.36 462.84 757.76 463.04 759.96 462.94S764.56 462.04 765.89 460.64C768.39 458.94 771.39 458.64 774.09 458.64S779.69 459.94 781.89 461.84C783.49 462.84 785.89 463.04 788.09 462.94S792.69 462.04 794.02 460.64C796.52 458.94 799.52 458.64 802.22 458.64S807.82 459.94 810.02 461.84C811.62 462.84 814.02 463.04 816.22 462.94S820.82 462.04 822.15 460.64C824.65 458.94 827.65 458.64 830.35 458.64S835.95 459.94 838.15 461.84C839.75 462.84 842.15 463.04 844.35 462.94S848.95 462.04 850.28 460.64C852.78 458.94 855.78 458.64 858.48 458.64S864.08 459.94 866.28 461.84C867.88 462.84 870.28 463.04 872.48 462.94S877.08 462.04 878.41 460.64C880.91 458.94 883.91 458.64 886.61 458.64S892.21 459.94 894.41 461.84C896.01 462.84 898.41 463.04 900.61 462.94S905.21 462.04 906.54 460.64C909.04 458.94 912.04 458.64 914.74 458.64S920.34 459.94 922.54 461.84C924.14 462.84 926.54 463.04 928.74 462.94S933.34 462.04 934.67 460.64C937.17 458.94 940.17 458.64 942.87 458.64S948.47 459.94 950.67 461.84C952.27 462.84 954.67 463.04 956.87 462.94S961.47 462.04 962.80 460.64C965.30 458.94 968.30 458.64 971.00 458.64S976.60 459.94 978.80 461.84C980.40 462.84 982.80 463.04 985.00 462.94S989.60 462.04 990.93 460.64M625.24 467.88C627.74 466.18 630.74 465.88 633.44 465.88S639.04 467.18 641.24 469.08C642.84 470.08 645.24 470.28 647.44 470.18S652.04 469.28 653.37 467.88C655.87 466.18 658.87 465.88 661.57 465.88S667.17 467.18 669.37 469.08C670.97 470.08 673.37 470.28 675.57 470.18S680.17 469.28 681.50 467.88C684.00 466.18 687.00 465.88 689.70 465.88S695.30 467.18 697.50 469.08C699.10 470.08 701.50 470.28 703.70 470.18S708.30 469.28 709.63 467.88C712.13 466.18 715.13 465.88 717.83 465.88S723.43 467.18 725.63 469.08C727.23 470.08 729.63 470.28 731.83 470.18S736.43 469.28 737.76 467.88C740.26 466.18 743.26 465.88 745.96 465.88S751.56 467.18 753.76 469.08C755.36 470.08 757.76 470.28 759.96 470.18S764.56 469.28 765.89 467.88C768.39 466.18 771.39 465.88 774.09 465.88S779.69 467.18 781.89 469.08C783.49 470.08 785.89 470.28 788.09 470.18S792.69 469.28 794.02 467.88C796.52 466.18 799.52 465.88 802.22 465.88S807.82 467.18 810.02 469.08C811.62 470.08 814.02 470.28 816.22 470.18S820.82 469.28 822.15 467.88C824.65 466.18 827.65 465.88 830.35 465.88S835.95 467.18 838.15 469.08C839.75 470.08 842.15 470.28 844.35 470.18S848.95 469.28 850.28 467.88C852.78 466.18 855.78 465.88 858.48 465.88S864.08 467.18 866.28 469.08C867.88 470.08 870.28 470.28 872.48 470.18S877.08 469.28 878.41 467.88C880.91 466.18 883.91 465.88 886.61 465.88S892.21 467.18 894.41 469.08C896.01 470.08 898.41 470.28 900.61 470.18S905.21 469.28 906.54 467.88C909.04 466.18 912.04 465.88 914.74 465.88S920.34 467.18 922.54 469.08C924.14 470.08 926.54 470.28 928.74 470.18S933.34 469.28 934.67 467.88C937.17 466.18 940.17 465.88 942.87 465.88S948.47 467.18 950.67 469.08C952.27 470.08 954.67 470.28 956.87 470.18S961.47 469.28 962.80 467.88C965.30 466.18 968.30 465.88 971.00 465.88S976.60 467.18 978.80 469.08C980.40 470.08 982.80 470.28 985.00 470.18S989.60 469.28 990.93 467.88M625.24 475.12C627.74 473.42 630.74 473.12 633.44 473.12S639.04 474.42 641.24 476.32C642.84 477.32 645.24 477.52 647.44 477.42S652.04 476.52 653.37 475.12C655.87 473.42 658.87 473.12 661.57 473.12S667.17 474.42 669.37 476.32C670.97 477.32 673.37 477.52 675.57 477.42S680.17 476.52 681.50 475.12C684.00 473.42 687.00 473.12 689.70 473.12S695.30 474.42 697.50 476.32C699.10 477.32 701.50 477.52 703.70 477.42S708.30 476.52 709.63 475.12C712.13 473.42 715.13 473.12 717.83 473.12S723.43 474.42 725.63 476.32C727.23 477.32 729.63 477.52 731.83 477.42S736.43 476.52 737.76 475.12C740.26 473.42 743.26 473.12 745.96 473.12S751.56 474.42 753.76 476.32C755.36 477.32 757.76 477.52 759.96 477.42S764.56 476.52 765.89 475.12C768.39 473.42 771.39 473.12 774.09 473.12S779.69 474.42 781.89 476.32C783.49 477.32 785.89 477.52 788.09 477.42S792.69 476.52 794.02 475.12C796.52 473.42 799.52 473.12 802.22 473.12S807.82 474.42 810.02 476.32C811.62 477.32 814.02 477.52 816.22 477.42S820.82 476.52 822.15 475.12C824.65 473.42 827.65 473.12 830.35 473.12S835.95 474.42 838.15 476.32C839.75 477.32 842.15 477.52 844.35 477.42S848.95 476.52 850.28 475.12C852.78 473.42 855.78 473.12 858.48 473.12S864.08 474.42 866.28 476.32C867.88 477.32 870.28 477.52 872.48 477.42S877.08 476.52 878.41 475.12C880.91 473.42 883.91 473.12 886.61 473.12S892.21 474.42 894.41 476.32C896.01 477.32 898.41 477.52 900.61 477.42S905.21 476.52 906.54 475.12C909.04 473.42 912.04 473.12 914.74 473.12S920.34 474.42 922.54 476.32C924.14 477.32 926.54 477.52 928.74 477.42S933.34 476.52 934.67 475.12C937.17 473.42 940.17 473.12 942.87 473.12S948.47 474.42 950.67 476.32C952.27 477.32 954.67 477.52 956.87 477.42S961.47 476.52 962.80 475.12C965.30 473.42 968.30 473.12 971.00 473.12S976.60 474.42 978.80 476.32C980.40 477.32 982.80 477.52 985.00 477.42S989.60 476.52 990.93 475.12" fill="none" stroke="#0a0a0a" stroke-width="1.3"/></g>
<path d="M640 410.3H828.6L943.4 468" fill="none" stroke="#222" stroke-width="1"/>
<polygon points="640,468 943.4,468 1002,497.6 1002,511.6 943,481.7 640,481.7" fill="url(#stip)"/>
<path d="M640 468H943.4L1002 497.6" fill="none" stroke="#000" stroke-width="2.2"/>
<path d="M640 481.7H943L1002 511.8" fill="none" stroke="#000" stroke-width="2.2"/>
<path d="M438 525.5H1000" stroke="#111" stroke-width="1" fill="none"/>
<rect x="438" y="567" width="562" height="2.1" fill="#000"/>
<path d="M438 570.1H1000" stroke="#8a8a8a" stroke-width="1.6" stroke-dasharray="1.2 2.46" fill="none"/>
<path d="M438 571.7H1000" stroke="#666" stroke-width="0.9" fill="none"/>
<polygon points="387,531.8 425,513 456,513 387,546.3" fill="url(#stip)"/>
<path d="M425 513L387 531.8V546.3L456 513" fill="none" stroke="#000" stroke-width="2.1" stroke-linejoin="miter"/>
<path d="M387 546.4H428.5" stroke="#111" stroke-width="1.1" fill="none"/>
<rect x="428.2" y="524.6" width="10.8" height="60" fill="#fff"/>
<g clip-path="url(#wallclip)"><path d="M427 521.6L441 507.6M427 528.8L441 514.8M427 536.0L441 522.0M427 543.2L441 529.2M427 550.4L441 536.4M427 557.6L441 543.6M427 564.8L441 550.8M427 572.0L441 558.0M427 579.2L441 565.2M427 586.4L441 572.4M427 593.6L441 579.6M427 600.8L441 586.8M427 608.0L441 594.0M427 615.2L441 601.2M427 622.4L441 608.4M427 629.6L441 615.6" stroke="#444" stroke-width="0.9" fill="none"/></g>
<path d="M429.2 582V525.7H438.6" fill="none" stroke="#000" stroke-width="2.1"/>
<path d="M438.1 524.7V582" fill="none" stroke="#000" stroke-width="1.5"/>
<path d="M423.5 550.5H1000" stroke="#6a6aff" stroke-width="1" fill="none"/>
<path d="M429.3 541V571.5M437.8 541V571.5" stroke="#7070ff" stroke-width="0.9" fill="none"/>
<text x="413.6" y="548.8" font-family="Liberation Sans, sans-serif" font-size="10" fill="#2222ee" textLength="11.2" lengthAdjust="spacingAndGlyphs">13</text>
<rect x="0" y="149" width="3.5" height="431" fill="#dcdcdc"/>
<rect x="0" y="349" width="3.5" height="8.5" fill="#3030d8"/>
<rect x="0" y="350" width="3.5" height="6.5" fill="#a848b0"/>
<rect x="0" y="364" width="3" height="1.2" fill="#4848e0"/>
</svg>
<div class="menu" style="left:3px;top:22px;width:295px;height:556px;border-radius:0 0 5px 5px;">
</div>
<span class="t" style="left:24.20px;top:27.00px;font-size:14px;line-height:16px;letter-spacing:0.281px;color:#262626;">Documenting Tools</span>
<div class="arr" style="left:276.8px;top:30.0px;"></div>
<div class="a" style="left:3px;top:50.0px;width:295px;height:2px;background:#dadada;"></div>
<span class="t" style="left:24.20px;top:58.00px;font-size:14px;line-height:16px;letter-spacing:-0.144px;color:#262626;">Layers</span>
<span class="t" style="left:24.20px;top:77.00px;font-size:14px;line-height:16px;letter-spacing:0.182px;color:#262626;">Model View</span>
<span class="t" style="left:23.90px;top:96.00px;font-size:14px;line-height:16px;letter-spacing:0.219px;color:#262626;">Graphic Overrides</span>
<span class="t" style="left:24.20px;top:115.00px;font-size:14px;line-height:16px;letter-spacing:-0.002px;color:#262626;">Renovation</span>
<span class="t" style="left:24.20px;top:134.00px;font-size:14px;line-height:16px;letter-spacing:-0.145px;color:#262626;">Pen Sets</span>
<div class="arr" style="left:276.8px;top:61.0px;"></div>
<div class="arr" style="left:276.8px;top:80.0px;"></div>
<div class="arr" style="left:276.8px;top:99.0px;"></div>
<div class="arr" style="left:276.8px;top:118.0px;"></div>
<div class="arr" style="left:276.8px;top:137.0px;"></div>
<span class="t" style="left:46.20px;top:154.70px;font-size:14px;line-height:16px;letter-spacing:0.148px;color:#262626;">Partial Structure Display...</span>
<div class="a" style="left:3px;top:179.0px;width:295px;height:2px;background:#dadada;"></div>
<span class="t" style="left:46.20px;top:188.50px;font-size:14px;line-height:16px;letter-spacing:-0.048px;color:#262626;">Floor Plan Cut Plane...</span>
<span class="t" style="left:45.90px;top:210.50px;font-size:14px;line-height:16px;letter-spacing:0.055px;color:#262626;">Section Scale...</span>
<span class="t" style="left:46.20px;top:232.50px;font-size:14px;line-height:16px;letter-spacing:0.058px;color:#262626;">Issue Manager</span>
<span class="t" style="left:46.20px;top:254.50px;font-size:14px;line-height:16px;letter-spacing:0.070px;color:#262626;">Issue Organizer</span>
<span class="t" style="left:45.90px;top:276.50px;font-size:14px;line-height:16px;letter-spacing:0.109px;color:#262626;">Change Manager</span>
<div class="a" style="left:3px;top:301.0px;width:295px;height:2px;background:#dadada;"></div>
<div class="a" style="left:3px;top:308px;width:295px;height:19px;background:#4e8af0;"></div>
<span class="t" style="left:23.90px;top:308.70px;font-size:14px;line-height:16px;letter-spacing:0.296px;color:#fff;">Annotation</span>
<div class="arr w" style="left:276.8px;top:312.0px;"></div>
<span class="t" style="left:46.20px;top:329.50px;font-size:14px;line-height:16px;letter-spacing:0.156px;color:#b2b2b2;">Label Selected Elements</span>
<span class="t" style="left:46.20px;top:351.50px;font-size:14px;line-height:16px;letter-spacing:0.117px;color:#b2b2b2;">Exterior Dimensioning...</span>
<span class="t" style="left:46.20px;top:373.50px;font-size:14px;line-height:16px;letter-spacing:0.167px;color:#b2b2b2;">Interior Dimensioning...</span>
<span class="t" style="left:23.90px;top:393.70px;font-size:14px;line-height:16px;letter-spacing:0.152px;color:#262626;">Creative Imaging</span>
<div class="arr" style="left:276.8px;top:397.0px;"></div>
<div class="a" style="left:3px;top:417.0px;width:295px;height:2px;background:#dadada;"></div>
<span class="t" style="left:23.90px;top:424.50px;font-size:14px;line-height:16px;letter-spacing:0.215px;color:#262626;">Schedules</span>
<span class="t" style="left:24.20px;top:443.50px;font-size:14px;line-height:16px;letter-spacing:0.174px;color:#262626;">Listing Extras</span>
<span class="t" style="left:24.20px;top:462.50px;font-size:14px;line-height:16px;letter-spacing:0.129px;color:#262626;">Project Indexes</span>
<span class="t" style="left:24.20px;top:481.50px;font-size:14px;line-height:16px;letter-spacing:0.143px;color:#262626;">Layout Book</span>
<span class="t" style="left:24.20px;top:500.50px;font-size:14px;line-height:16px;letter-spacing:0.135px;color:#262626;">Drawings</span>
<div class="arr" style="left:276.8px;top:428.0px;"></div>
<div class="arr" style="left:276.8px;top:447.0px;"></div>
<div class="arr" style="left:276.8px;top:466.0px;"></div>
<div class="arr" style="left:276.8px;top:485.0px;"></div>
<div class="arr" style="left:276.8px;top:504.0px;"></div>
<span class="t" style="left:45.90px;top:521.50px;font-size:14px;line-height:16px;letter-spacing:0.088px;color:#262626;">Save View and Place on Layout</span>
<span class="t" style="left:278.9px;top:524.5px;font-size:11px;line-height:12px;letter-spacing:0.7px;color:#2e2e2e;-webkit-text-stroke:0.4px;transform:scaleX(0.86);transform-origin:0 0;">F7</span>
<div class="a" style="left:3px;top:546.0px;width:295px;height:2px;background:#dadada;"></div>
<span class="t" style="left:46.20px;top:555.50px;font-size:14px;line-height:16px;letter-spacing:-0.032px;color:#262626;">Publish...</span>
<svg width="300" height="580" viewBox="0 0 300 580" style="left:0;top:0;" fill="none">
<path d="M25 153L27.5 155.5M28.5 153L31 155.5M32 153L34.5 155.5M35.5 153L38 155.5M39 153L41.5 155.5" stroke="#b5b8bb" stroke-width="0.9"/>
<path d="M26 167L29.5 170.8M29.5 167L33 170.8M33 167L36.5 170.8M36.5 167L40 170.8M40 167L42 169.2" stroke="#b5b8bb" stroke-width="0.9"/>
<path d="M24 157H42M24 165H42" stroke="#262d33" stroke-width="2"/>
<clipPath id="pshc"><rect x="24" y="156" width="18" height="10"/></clipPath>
<path clip-path="url(#pshc)" d="M24 161.2L26.6 158M25.2 164L30 158M28.6 164L33.4 158M32 164L36.8 158M35.4 164L40.2 158M38.8 164L42 160M41.4 164.6L42.4 163.2" stroke="#262d33" stroke-width="1.15"/>
<path d="M24.3 192L30.1 187.3L35.9 192M25.9 191V200M34.5 191V200M25.9 195.5H34.5" stroke="#262d33" stroke-width="1.1"/>
<rect x="28.3" y="191.4" width="3.7" height="2" stroke="#262d33" stroke-width="1"/>
<path d="M28.3 200V197.4H32V200" stroke="#262d33" stroke-width="1"/>
<path d="M24.2 200.4H41.8" stroke="#3069f0" stroke-width="1.2"/>
<path d="M37 197.3H41.8L39.4 200Z" fill="#3069f0"/>
<path d="M25.9 201.8V204.6H34.5V201.8" stroke="#262d33" stroke-width="1.1"/>
<path d="M28.1 202V204.2M30.2 202V204.2M32.3 202V204.2" stroke="#262d33" stroke-width="0.8"/>
<path d="M24.2 214.7H41.8" stroke="#262d33" stroke-width="1.4"/>
<path d="M26.4 215V217.9M29 215V217.9M31.6 215V217.9M34.2 215V217.9M36.8 215V217.9M39.4 215V217.9" stroke="#262d33" stroke-width="0.9"/>
<path d="M24.2 221.1H41.8" stroke="#262d33" stroke-width="1.3"/>
<path d="M26.4 219.6V220.6M28.9 219.8V220.6M31.4 219.6V220.6M33.9 219.8V220.6M36.4 219.6V220.6M38.9 219.8V220.6" stroke="#9aa0a4" stroke-width="0.9"/>
<path transform="translate(-870.2 177)" d="M896.6 71.2V56.6H906.6L904 59.6L906.6 62.6H896.6" stroke="#262d33" stroke-width="1.2" fill="none"/>
<g transform="translate(-900.2 199)" fill="none"><path d="M926.6 71.2V56.6H936.6L934 59.4L935.4 61" stroke="#262d33" stroke-width="1.2"/><path d="M926.6 62.6H931.5" stroke="#262d33" stroke-width="1.2"/><path d="M933 64H934.8M936 64H941" stroke="#3069f0" stroke-width="1.9"/><path d="M933 67H934.8M936 67H941" stroke="#3069f0" stroke-width="1.9"/><path d="M933 70H934.8M936 70H941" stroke="#3069f0" stroke-width="1.9"/></g>
<g transform="translate(-930.2 220.8)" fill="none"><path d="M961 70.2H959.4C956.6 70.2 954.4 68 954.4 65.2C954.4 62.8 956 60.8 958.2 60.4C958.4 57.2 960.8 54.6 963.8 54.6C966.4 54.6 968.4 56.2 969.2 58.4C970.6 58.6 971.8 60 971.8 61.6V62.4" stroke="#262d33" stroke-width="1.1"/><rect x="962.5" y="63.4" width="9.4" height="8.2" rx="0.8" fill="#fff" stroke="#3069f0" stroke-width="1.1"/><path d="M962.5 64.4H971.9" stroke="#3069f0" stroke-width="1.6"/><path d="M964.4 67.5H965.4M966.4 67.5H970M964.4 69.5H965.4M966.4 69.5H970" stroke="#3069f0" stroke-width="0.9"/></g>
<g transform="translate(0 0)" fill="none" stroke="#858b8f"><rect x="24.5" y="339.3" width="15.2" height="5.9" stroke-width="1.25"/><path d="M32.8 332.3H28.4L25.4 335.3" stroke-width="1.1"/><path d="M24.2 333.2V336.7H27.7Z" fill="#858b8f" stroke-width="0.5"/><text x="32.9" y="335.8" font-family="Liberation Sans, sans-serif" font-size="9.4" font-weight="bold" fill="#858b8f" stroke="none" textLength="9.2" lengthAdjust="spacingAndGlyphs">A1</text></g>
<path d="M25.4 350.8V359.1H40.6V350.8M27.5 350.8V357.1H38.5V350.8" stroke="#858b8f" stroke-width="1.1"/>
<path d="M25.4 361.2V367.6M40.6 361.2V367.6M27 364.4H39" stroke="#858b8f" stroke-width="1.1"/>
<path d="M26 364.4L29.2 362.2V366.6ZM40 364.4L36.8 362.2V366.6Z" fill="#858b8f"/>
<path d="M25.4 385V376.4H40.6V385M27.6 385V378.3H38.4V385" stroke="#858b8f" stroke-width="1.1"/>
<path d="M29 383.2H37" stroke="#858b8f" stroke-width="1.1"/>
<path d="M28.2 383.2L31 381.2V385.2ZM37.8 383.2L35 381.2V385.2Z" fill="#858b8f"/>
<path d="M24.5 520.5H27V521.8H28.4V520.5H29.6V523H33.6V527H24.5ZM27.6 523.2V527" stroke="#262d33" stroke-width="1.1"/>
<path d="M24.5 529.3L29 533.2M29.2 530L29.3 533.4L26 533.5" stroke="#262d33" stroke-width="1.1"/>
<rect x="31.6" y="529.6" width="10" height="7.9" rx="1.5" stroke="#262d33" stroke-width="1.3"/>
<path d="M36.3 537.4V533.7H41.6M36.3 535.6H41.6" stroke="#262d33" stroke-width="1.2"/>
<path d="M272.4 524.4L277.6 530.2H275V535.4H269.8V530.2H267.2Z" stroke="#2b2b2b" stroke-width="1.1" stroke-linejoin="miter"/>
<path d="M32.6 555.6L31 554.4L24.5 560.2V570.6H31.6" stroke="#262d33" stroke-width="1.2"/>
<rect x="29.7" y="558.8" width="9" height="8" fill="#fff" stroke="#262d33" stroke-width="1.1"/>
<path d="M29.2 559.2H39.2" stroke="#262d33" stroke-width="1.9"/>
<rect x="32.9" y="563.6" width="8.6" height="7.5" rx="0.9" fill="#fff" stroke="#3069f0" stroke-width="1.2"/>
<path d="M32.4 564.2H42" stroke="#3069f0" stroke-width="1.8"/>
<path d="M34.2 567.5H35.2M36.2 567.5H40M34.2 569.5H35.2M36.2 569.5H40" stroke="#3069f0" stroke-width="0.9"/>
</svg>
<div class="menu" style="left:298px;top:304px;width:375.5px;height:211px;border-radius:5px;"></div>
<span class="t" style="left:341.20px;top:310.30px;font-size:14px;line-height:16px;letter-spacing:0.239px;color:#262626;">Revert All Dimension Texts to Automatic Position</span>
<span class="t" style="left:341.20px;top:332.30px;font-size:14px;line-height:16px;letter-spacing:0.202px;color:#262626;">Revert All Custom Texts to Measured Value</span>
<div class="a" style="left:298px;top:357.0px;width:375px;height:2px;background:#dadada;"></div>
<span class="t" style="left:319.20px;top:364.70px;font-size:14px;line-height:16px;letter-spacing:0.165px;color:#262626;">Secondary Dimensions</span>
<div class="arr" style="left:651.8px;top:368.0px;"></div>
<div class="a" style="left:298px;top:388.0px;width:375px;height:2px;background:#dadada;"></div>
<span class="t" style="left:341.20px;top:397.50px;font-size:14px;line-height:16px;letter-spacing:0.151px;color:#b2b2b2;">Label Selected Elements</span>
<span class="t" style="left:341.20px;top:419.50px;font-size:14px;line-height:16px;letter-spacing:0.197px;color:#b2b2b2;">Label Components of Selected Elements</span>
<div class="a" style="left:298px;top:444.0px;width:375px;height:2px;background:#dadada;"></div>
<span class="t" style="left:340.90px;top:453.50px;font-size:14px;line-height:16px;letter-spacing:0.009px;color:#b2b2b2;">Create Patch...</span>
<span class="t" style="left:319.20px;top:473.50px;font-size:14px;line-height:16px;letter-spacing:0.096px;color:#262626;">Spell Checker</span>
<div class="arr" style="left:651.8px;top:477.0px;"></div>
<div class="a" style="left:298px;top:492px;width:375.5px;height:19px;background:#4e8af0;"></div>
<span class="t" style="left:319.20px;top:492.70px;font-size:14px;line-height:16px;letter-spacing:0.183px;color:#fff;">Elevation/Section Dimensioning</span>
<div class="arr w" style="left:651.8px;top:496.0px;"></div>
<svg width="700" height="580" viewBox="0 0 700 580" style="left:0;top:0;" fill="none">
<text x="324" y="313.9" font-family="Liberation Sans, sans-serif" font-size="7" fill="#262d33" stroke="#262d33" stroke-width="0.3" textLength="11" lengthAdjust="spacingAndGlyphs">XY</text>
<path d="M319 315.5H337M321.5 313V317.8" stroke="#262d33" stroke-width="1.1"/>
<g transform="translate(0 0)" fill="none" stroke="#262d33" stroke-width="1.15"><path d="M323 321.4C325.2 318.8 329.6 317.6 332.4 319.2C335.4 321 335.4 324.6 330.4 326.6"/><path d="M321.2 319.2V322.8H325Z" fill="#262d33" stroke-width="0.6"/></g>
<text x="325.3" y="335.9" font-family="Liberation Sans, sans-serif" font-size="7" fill="#262d33" stroke="#262d33" stroke-width="0.3">1</text>
<path d="M319 337.5H337M321.5 335V339.8M334.5 335V339.8" stroke="#262d33" stroke-width="1.1"/>
<g transform="translate(0 22)" fill="none" stroke="#262d33" stroke-width="1.15"><path d="M323 321.4C325.2 318.8 329.6 317.6 332.4 319.2C335.4 321 335.4 324.6 330.4 326.6"/><path d="M321.2 319.2V322.8H325Z" fill="#262d33" stroke-width="0.6"/></g>
<g transform="translate(295 68.1)" fill="none" stroke="#7f868b"><rect x="24.5" y="339.3" width="15.2" height="5.9" stroke-width="1.25"/><path d="M32.8 332.3H28.4L25.4 335.3" stroke-width="1.1"/><path d="M24.2 333.2V336.7H27.7Z" fill="#7f868b" stroke-width="0.5"/><text x="32.9" y="335.8" font-family="Liberation Sans, sans-serif" font-size="9.4" font-weight="bold" fill="#7f868b" stroke="none" textLength="9.2" lengthAdjust="spacingAndGlyphs">A1</text></g>
<g transform="translate(295 90.1)" fill="none" stroke="#7f868b"><rect x="24.5" y="339.3" width="15.2" height="5.9" stroke-width="1.25"/><path d="M29.6 339.3V345.2M34.6 339.3V345.2" stroke-width="1.1"/><path d="M32.8 332.3H28.4L25.4 335.3" stroke-width="1.1"/><path d="M24.2 333.2V336.7H27.7Z" fill="#7f868b" stroke-width="0.5"/><text x="32.9" y="335.8" font-family="Liberation Sans, sans-serif" font-size="9.4" font-weight="bold" fill="#7f868b" stroke="none" textLength="9.2" lengthAdjust="spacingAndGlyphs">A1</text></g>
<path d="M319.5 454.5L321.5 452.4L323.5 454.5L325.5 452.4L327.5 454.5L329.5 452.4L331.5 454.5L333.5 452.4L335.5 454.5L333.4 456.5L335.5 458.5L333.4 460.5L335.5 462.5L333.4 464.5L335.5 466.5L333.5 468.6L331.5 466.5L329.5 468.6L327.5 466.5L325.5 468.6L323.5 466.5L321.5 468.6L319.5 466.5L321.6 464.5L319.5 462.5L321.6 460.5L319.5 458.5L321.6 456.5L319.5 454.5Z" stroke="#737b80" stroke-width="1.25" stroke-linejoin="round"/>
</svg>
<div class="menu" style="left:673.5px;top:488px;width:209.5px;height:84px;border-radius:5px;"></div>
<span class="t" style="left:693.90px;top:492.70px;font-size:14px;line-height:16px;letter-spacing:0.222px;color:#262626;">Vertical Dimensioning...</span>
<span class="t" style="left:694.20px;top:511.70px;font-size:14px;line-height:16px;letter-spacing:0.114px;color:#262626;">Elevation Dimensioning...</span>
<span class="t" style="left:694.20px;top:530.70px;font-size:14px;line-height:16px;letter-spacing:0.208px;color:#262626;">Horizontal Dimensioning...</span>
<div class="a" style="left:673.5px;top:549px;width:209.5px;height:19px;background:#4e8af0;"></div>
<span class="t" style="left:694.20px;top:549.70px;font-size:14px;line-height:16px;letter-spacing:0.103px;color:#fff;">Refresh Dimensions</span>
</body></html>
